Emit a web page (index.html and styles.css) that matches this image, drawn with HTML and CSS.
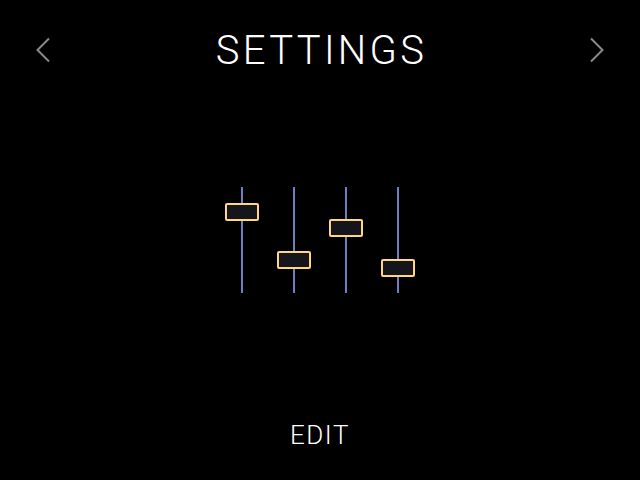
FILE: index.html
```html
<!DOCTYPE html>
<html>
<head>
<meta charset="utf-8">
<link rel="stylesheet" href="styles.css">
</head>
<body>
<div class="screen">
  <header class="header">
    <button class="nav" aria-label="Previous">
      <svg width="16" height="26" viewBox="0 0 16 26"><polyline points="13,1.5 1.5,13 13,24.5" fill="none" stroke="#8a8a8a" stroke-width="2"/></svg>
    </button>
    <h1 class="title">SETTINGS</h1>
    <button class="nav" aria-label="Next">
      <svg width="16" height="26" viewBox="0 0 16 26"><polyline points="3,1.5 14.5,13 3,24.5" fill="none" stroke="#8a8a8a" stroke-width="2"/></svg>
    </button>
  </header>
  <main class="mixer">
    <div class="fader"><div class="track"></div><div class="knob" style="top:16px"></div></div>
    <div class="fader"><div class="track"></div><div class="knob" style="top:64px"></div></div>
    <div class="fader"><div class="track"></div><div class="knob" style="top:32px"></div></div>
    <div class="fader"><div class="track"></div><div class="knob" style="top:72px"></div></div>
  </main>
  <footer class="footer">EDIT</footer>
</div>
</body>
</html>
```
FILE: styles.css
```css
html, body {
  margin: 0;
  padding: 0;
  background: #000;
}
.screen {
  width: 640px;
  height: 480px;
  display: flex;
  flex-direction: column;
  font-family: Roboto, "Liberation Sans", sans-serif;
  color: #fff;
}
.header {
  height: 100px;
  display: flex;
  align-items: center;
  justify-content: space-between;
  padding: 0 36px;
  box-sizing: border-box;
}
.nav {
  background: none;
  border: 0;
  padding: 0;
  width: 16px;
  height: 26px;
  display: flex;
}
.title {
  margin: 0;
  font-size: 40px;
  font-weight: 300;
  letter-spacing: 3.3px;
  line-height: 48px;
  padding: 2px 0 0 3px;
}
.mixer {
  margin-top: 87px;
  display: flex;
  justify-content: center;
  gap: 18px;
}
.fader {
  position: relative;
  width: 34px;
  height: 106px;
  display: flex;
  justify-content: center;
}
.track {
  width: 2px;
  height: 100%;
  background: #6c7fc0;
}
.knob {
  position: absolute;
  left: 0;
  width: 34px;
  height: 18px;
  box-sizing: border-box;
  border: 2px solid #ffd57e;
  border-radius: 2px;
  background: #15161b;
}
.footer {
  margin-top: auto;
  padding-bottom: 30px;
  text-align: center;
  font-size: 26px;
  font-weight: 300;
  line-height: 30px;
  letter-spacing: 1.5px;
}
```
